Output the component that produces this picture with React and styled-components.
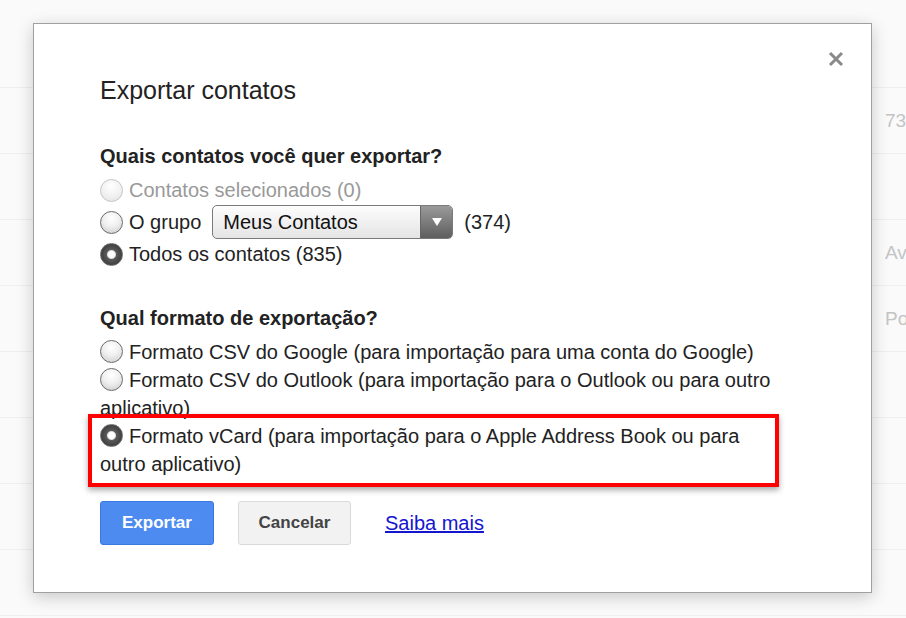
import styled, { createGlobalStyle } from "styled-components"

const GlobalStyle = createGlobalStyle`
	html, body {
		margin: 0;
		padding: 0;
		background: #fafafa;
		font-family: "Liberation Sans", Arial, sans-serif;
	}
`

const Page = styled.div`
	position: relative;
	width: 906px;
	height: 618px;
	overflow: hidden;
	background: #fafafa;
`
const BackList = styled.div`
	display: flex;
	flex-direction: column;
	padding-top: 22px;
`
const BackRow = styled.div`
	height: 65px;
	border-bottom: 1px solid #efefef;
	display: flex;
	align-items: center;
	justify-content: flex-end;
	font-size: 19px;
	color: #c4c4c4;
`
const BackCell = styled.span`
	width: 21px;
	overflow: hidden;
	white-space: nowrap;
`

const Dialog = styled.div`
	position: absolute;
	left: 33px;
	top: 23px;
	width: 839px;
	height: 570px;
	box-sizing: border-box;
	background: #fff;
	border: 1px solid #a0a0a0;
	box-shadow: 0 4px 16px rgba(0, 0, 0, 0.2);
	padding: 52px 60px 0 66px;
	color: #222;
`
const Close = styled.button`
	position: absolute;
	right: 26px;
	top: 26px;
	width: 18px;
	height: 18px;
	padding: 0;
	border: 0;
	background: transparent;
	cursor: pointer;
`
const Title = styled.h2`
	margin: 0;
	font-size: 25px;
	font-weight: normal;
	line-height: 28px;
	color: #222;
`
const Heading = styled.h3`
	margin: ${(p) => p.$top}px 0 0;
	font-size: 20px;
	font-weight: bold;
	line-height: 24px;
	color: #222;
`
const Options = styled.div`
	display: flex;
	flex-direction: column;
	margin-top: ${(p) => p.$top}px;
`
const Row = styled.label`
	display: flex;
	align-items: center;
	height: ${(p) => p.$h}px;
	font-size: 20px;
	color: ${(p) => (p.$disabled ? "#999" : "#222")};
	white-space: nowrap;
`
const Radio = styled.span`
	flex: none;
	width: 23px;
	height: 23px;
	border-radius: 50%;
	margin-right: 6px;
	box-sizing: border-box;
	border: 1px solid ${(p) => (p.$disabled ? "#c4c4c4" : "#6a6a6a")};
	background: ${(p) =>
		p.$checked
			? "radial-gradient(circle at 50% 50%, #fff 0 3px, #ddd 4px, #5a5a5a 5px, #3d3d3d 11px)"
			: p.$disabled
			? "radial-gradient(circle at 50% 30%, #fff 0, #f2f2f2 50%, #e2e2e2 100%)"
			: "radial-gradient(circle at 50% 30%, #fff 0, #f0f0f0 45%, #c8c8c8 100%)"};
`
const Select = styled.div`
	display: flex;
	align-items: stretch;
	width: 241px;
	height: 34px;
	box-sizing: border-box;
	margin: 0 11px 0 11px;
	border: 1px solid #7a7a7a;
	border-radius: 5px;
	background: linear-gradient(#fdfdfd, #e4e4e4);
	overflow: hidden;
`
const SelectText = styled.span`
	flex: 1;
	display: flex;
	align-items: center;
	padding-left: 10px;
	font-size: 20px;
	color: #111;
`
const SelectArrow = styled.span`
	width: 31px;
	display: flex;
	align-items: center;
	justify-content: center;
	border-left: 1px solid #666;
	background: linear-gradient(#9a9a9a, #5e5e5e);
`
const OptionList = styled.div`
	display: flex;
	flex-direction: column;
	margin-top: 8px;
	width: 700px;
`
const Option = styled.label`
	display: block;
	font-size: 20px;
	line-height: 28px;
	color: #222;
	${(p) => p.$boxed && `
		width: 691px;
		box-sizing: border-box;
		margin: -8px 0 -9px -12px;
		padding: 4px 8px 5px 8px;
		border: 4px solid #f00;
		box-shadow: 0 3px 6px rgba(0, 0, 0, 0.35);
	`}
`
const InlineRadio = styled(Radio)`
	display: inline-block;
	vertical-align: -4px;
`
const Actions = styled.div`
	display: flex;
	align-items: center;
	margin-top: 23px;
`
const Button = styled.button`
	height: 44px;
	width: ${(p) => p.$w}px;
	margin-right: ${(p) => p.$gap}px;
	padding: 0;
	border-radius: 3px;
	font-family: inherit;
	font-size: 17px;
	font-weight: bold;
	cursor: pointer;
	border: 1px solid ${(p) => (p.$primary ? "#3a78e0" : "#dadada")};
	background: ${(p) => (p.$primary ? "#4d8bf0" : "#f2f2f2")};
	color: ${(p) => (p.$primary ? "#fff" : "#444")};
`
const Link = styled.a`
	font-size: 20px;
	color: #1515d0;
	text-decoration: underline;
	cursor: pointer;
`

const App = () => {
	const backRows = ["", "73", "", "Av", "Po", "", "", "", ""]
	return (
		<Page>
			<GlobalStyle />
			<BackList>
				{backRows.map((t, i) => (
					<BackRow key={i}>
						<BackCell>{t}</BackCell>
					</BackRow>
				))}
			</BackList>
			<Dialog>
				<Close aria-label="Fechar">
					<svg width="18" height="18" viewBox="0 0 18 18">
						<path d="M3 3L15 15M15 3L3 15" stroke="#8a8a8a" strokeWidth="3" />
					</svg>
				</Close>
				<Title>Exportar contatos</Title>
				<Heading $top={40}>Quais contatos você quer exportar?</Heading>
				<Options $top={7}>
					<Row $h={30} $disabled>
						<Radio $disabled />
						Contatos selecionados (0)
					</Row>
					<Row $h={34}>
						<Radio />
						O grupo
						<Select>
							<SelectText>Meus Contatos</SelectText>
							<SelectArrow>
								<svg width="12" height="10" viewBox="0 0 12 10">
									<path d="M1 1H11L6 9Z" fill="#fff" />
								</svg>
							</SelectArrow>
						</Select>
						(374)
					</Row>
					<Row $h={30}>
						<Radio $checked />
						Todos os contatos (835)
					</Row>
				</Options>
				<Heading $top={37}>Qual formato de exportação?</Heading>
				<OptionList>
					<Option>
						<InlineRadio />
						Formato CSV do Google (para importação para uma conta do Google)
					</Option>
					<Option>
						<InlineRadio />
						Formato CSV do Outlook (para importação para o Outlook ou para outro aplicativo)
					</Option>
					<Option $boxed>
						<InlineRadio $checked />
						Formato vCard (para importação para o Apple Address Book ou para outro aplicativo)
					</Option>
				</OptionList>
				<Actions>
					<Button $primary $w={114} $gap={24}>Exportar</Button>
					<Button $w={113} $gap={34}>Cancelar</Button>
					<Link>Saiba mais</Link>
				</Actions>
			</Dialog>
		</Page>
	)
}
export default App
